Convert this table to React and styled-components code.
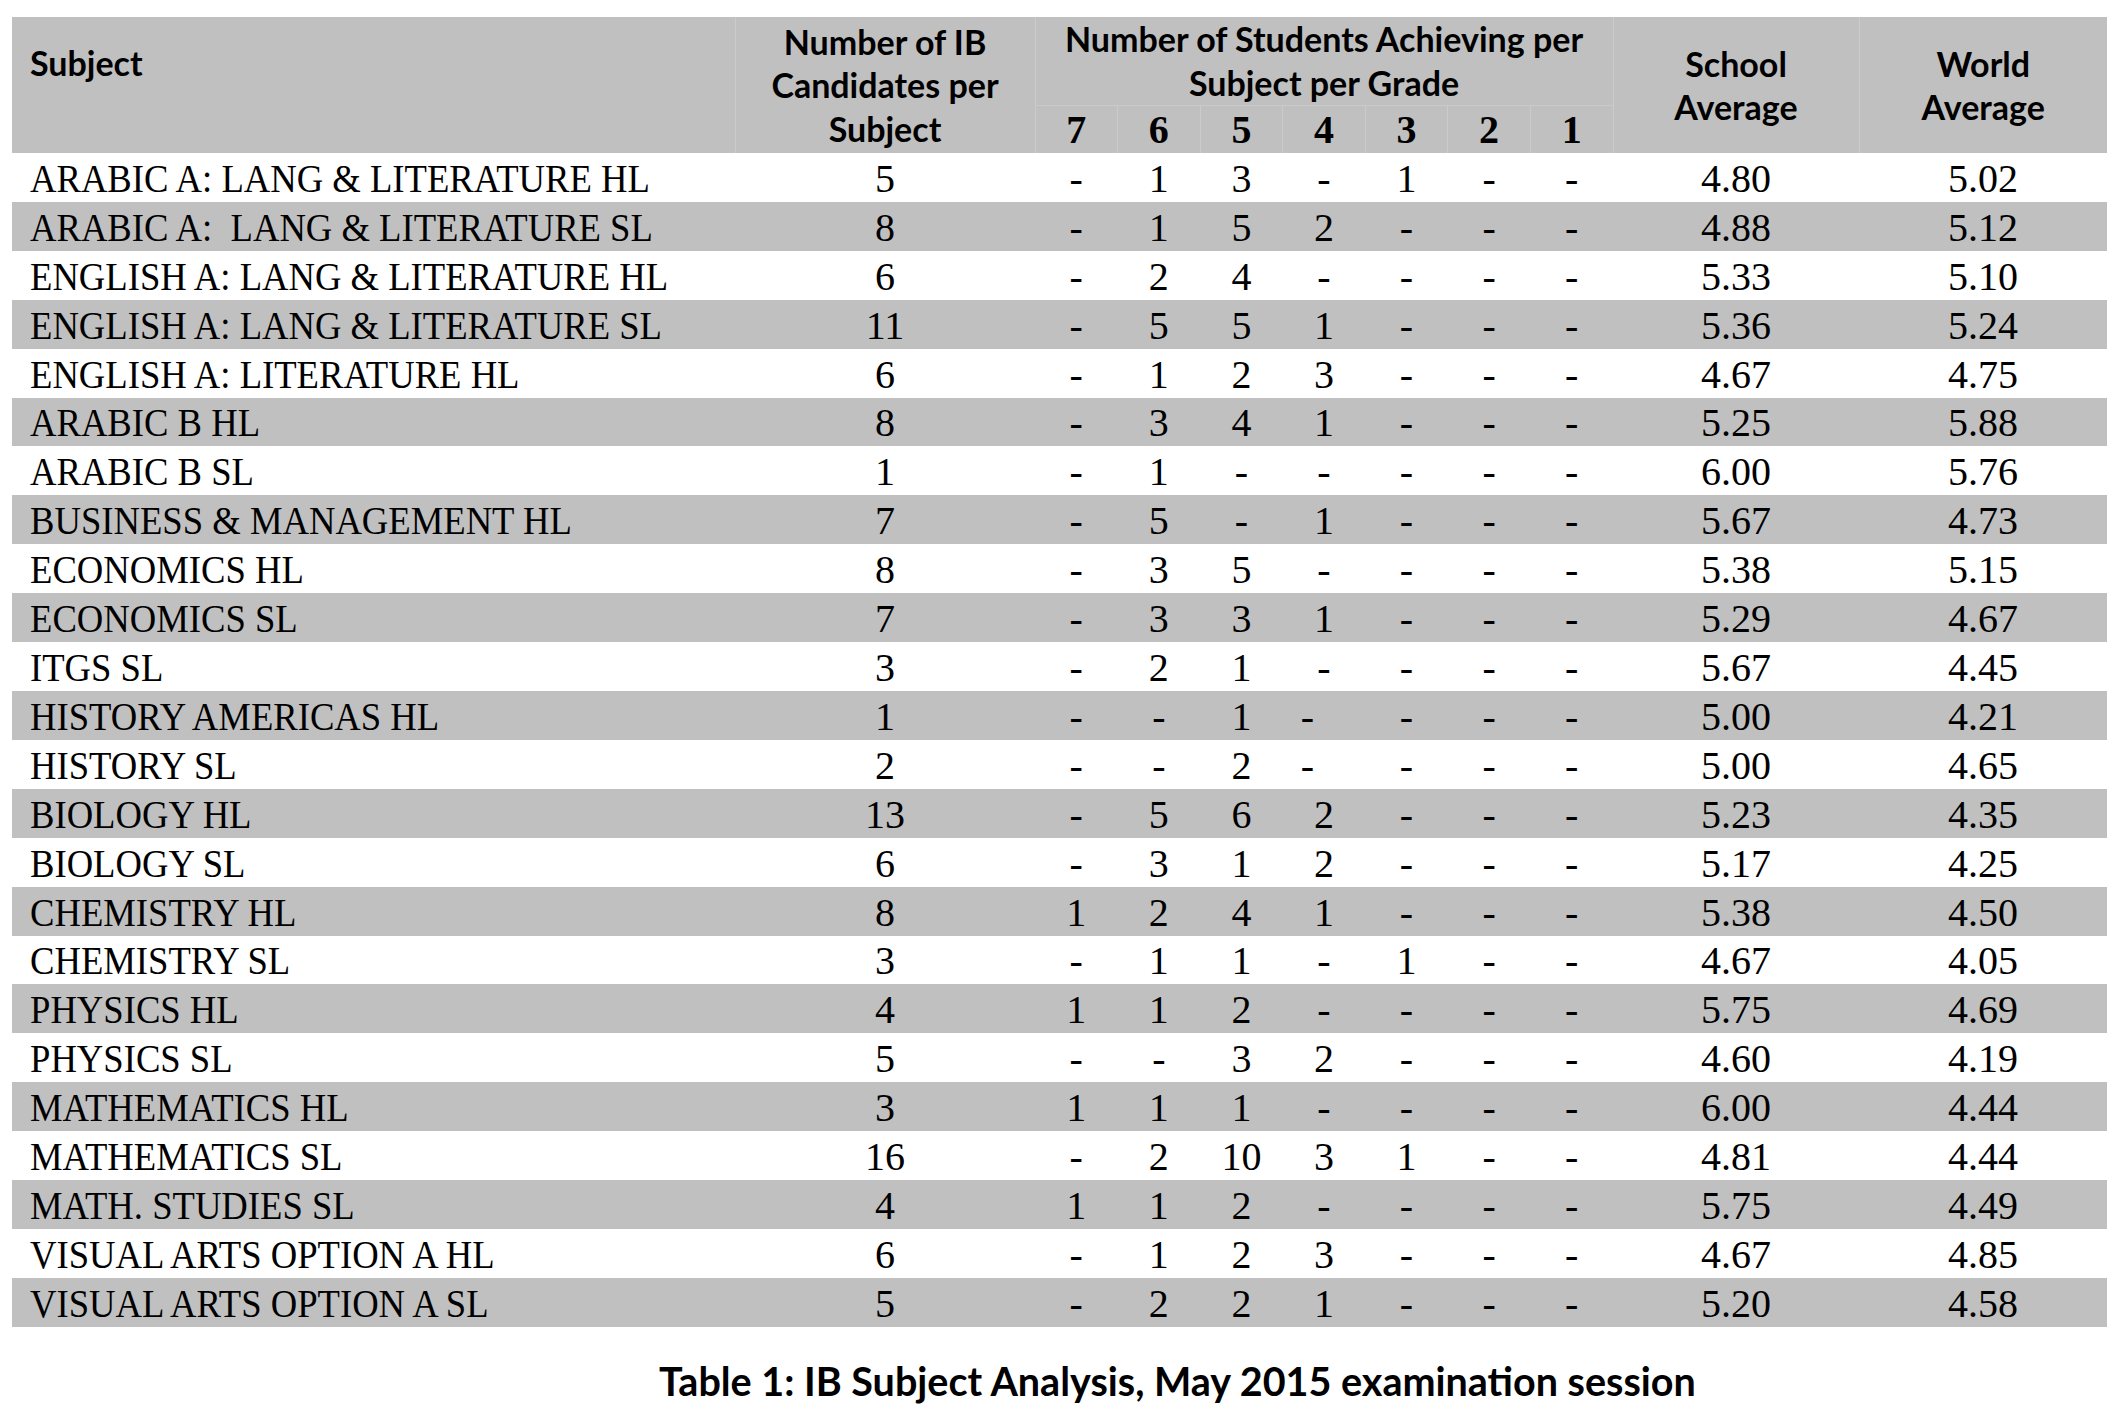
import React from 'react';
import styled, { createGlobalStyle } from 'styled-components';

// results for the May 2015 session, one row per subject
// grades are listed 7 → 1, '-' means nobody got that grade
const subjects = [
  { name: 'ARABIC A: LANG & LITERATURE HL', count: 5, grades: ['-', '1', '3', '-', '1', '-', '-'], school: '4.80', world: '5.02' },
  { name: 'ARABIC A:  LANG & LITERATURE SL', count: 8, grades: ['-', '1', '5', '2', '-', '-', '-'], school: '4.88', world: '5.12' },
  { name: 'ENGLISH A: LANG & LITERATURE HL', count: 6, grades: ['-', '2', '4', '-', '-', '-', '-'], school: '5.33', world: '5.10' },
  { name: 'ENGLISH A: LANG & LITERATURE SL', count: 11, grades: ['-', '5', '5', '1', '-', '-', '-'], school: '5.36', world: '5.24' },
  { name: 'ENGLISH A: LITERATURE HL', count: 6, grades: ['-', '1', '2', '3', '-', '-', '-'], school: '4.67', world: '4.75' },
  { name: 'ARABIC B HL', count: 8, grades: ['-', '3', '4', '1', '-', '-', '-'], school: '5.25', world: '5.88' },
  { name: 'ARABIC B SL', count: 1, grades: ['-', '1', '-', '-', '-', '-', '-'], school: '6.00', world: '5.76' },
  { name: 'BUSINESS & MANAGEMENT HL', count: 7, grades: ['-', '5', '-', '1', '-', '-', '-'], school: '5.67', world: '4.73' },
  { name: 'ECONOMICS HL', count: 8, grades: ['-', '3', '5', '-', '-', '-', '-'], school: '5.38', world: '5.15' },
  { name: 'ECONOMICS SL', count: 7, grades: ['-', '3', '3', '1', '-', '-', '-'], school: '5.29', world: '4.67' },
  { name: 'ITGS SL', count: 3, grades: ['-', '2', '1', '-', '-', '-', '-'], school: '5.67', world: '4.45' },
  { name: 'HISTORY AMERICAS HL', count: 1, grades: ['-', '-', '1', '-', '-', '-', '-'], school: '5.00', world: '4.21', shifted: 3 },
  { name: 'HISTORY SL', count: 2, grades: ['-', '-', '2', '-', '-', '-', '-'], school: '5.00', world: '4.65', shifted: 3 },
  { name: 'BIOLOGY HL', count: 13, grades: ['-', '5', '6', '2', '-', '-', '-'], school: '5.23', world: '4.35' },
  { name: 'BIOLOGY SL', count: 6, grades: ['-', '3', '1', '2', '-', '-', '-'], school: '5.17', world: '4.25' },
  { name: 'CHEMISTRY HL', count: 8, grades: ['1', '2', '4', '1', '-', '-', '-'], school: '5.38', world: '4.50' },
  { name: 'CHEMISTRY SL', count: 3, grades: ['-', '1', '1', '-', '1', '-', '-'], school: '4.67', world: '4.05' },
  { name: 'PHYSICS HL', count: 4, grades: ['1', '1', '2', '-', '-', '-', '-'], school: '5.75', world: '4.69' },
  { name: 'PHYSICS SL', count: 5, grades: ['-', '-', '3', '2', '-', '-', '-'], school: '4.60', world: '4.19' },
  { name: 'MATHEMATICS HL', count: 3, grades: ['1', '1', '1', '-', '-', '-', '-'], school: '6.00', world: '4.44' },
  { name: 'MATHEMATICS SL', count: 16, grades: ['-', '2', '10', '3', '1', '-', '-'], school: '4.81', world: '4.44' },
  { name: 'MATH. STUDIES SL', count: 4, grades: ['1', '1', '2', '-', '-', '-', '-'], school: '5.75', world: '4.49' },
  { name: 'VISUAL ARTS OPTION A HL', count: 6, grades: ['-', '1', '2', '3', '-', '-', '-'], school: '4.67', world: '4.85' },
  { name: 'VISUAL ARTS OPTION A SL', count: 5, grades: ['-', '2', '2', '1', '-', '-', '-'], school: '5.20', world: '4.58' },
];

const gradeLabels = ['7', '6', '5', '4', '3', '2', '1'];

const App = () => {
  return (
    <>
      <GlobalStyle />
      <Page>
        <Table>
          <colgroup>
            <col style={{ width: 723 }} />
            <col style={{ width: 300 }} />
            {gradeLabels.map((g) => (
              <col key={g} style={{ width: 82.57 }} />
            ))}
            <col style={{ width: 246 }} />
            <col style={{ width: 248 }} />
          </colgroup>
          <thead>
            <HeadRow $h={88}>
              <SubjectHead rowSpan={2}>Subject</SubjectHead>
              <HeadCell rowSpan={2}>
                Number of IB
                <br />
                Candidates per
                <br />
                Subject
              </HeadCell>
              <HeadCell colSpan={7}>
                Number of Students Achieving per
                <br />
                Subject per Grade
              </HeadCell>
              <HeadCell rowSpan={2}>
                School
                <br />
                Average
              </HeadCell>
              <HeadCell rowSpan={2}>
                World
                <br />
                Average
              </HeadCell>
            </HeadRow>
            <HeadRow $h={48}>
              {gradeLabels.map((g) => (
                <GradeHead key={g}>{g}</GradeHead>
              ))}
            </HeadRow>
          </thead>
          <tbody>
            {subjects.map((s, idx) => (
              <BodyRow key={s.name} $shaded={idx % 2 === 1}>
                <SubjectCell>
                  <Narrow>{s.name}</Narrow>
                </SubjectCell>
                <Cell>{s.count}</Cell>
                {s.grades.map((g, i) => (
                  <Cell key={i} $left={s.shifted === i}>
                    {g}
                  </Cell>
                ))}
                <Cell>{s.school}</Cell>
                <Cell>{s.world}</Cell>
              </BodyRow>
            ))}
          </tbody>
        </Table>
        <Caption>Table 1: IB Subject Analysis, May 2015 examination session</Caption>
      </Page>
    </>
  );
};

export default App;

const GlobalStyle = createGlobalStyle`
  html, body {
    margin: 0;
    padding: 0;
    background: #ffffff;
  }
`;

const Page = styled.div`
  width: 2110px;
  height: 1418px;
  padding: 17px 3px 0 12px;
  box-sizing: border-box;
  background: #ffffff;
  overflow: hidden;
`;

const Table = styled.table`
  width: 2095px;
  table-layout: fixed;
  border-collapse: collapse;
  border-spacing: 0;
`;

const HeadRow = styled.tr`
  height: ${(p) => p.$h}px;
  background: #c0c0c0;
`;

const HeadCell = styled.th`
  padding: 0;
  font-family: Lato, 'Open Sans', sans-serif;
  font-weight: 700;
  font-size: 34px;
  line-height: 43.5px;
  color: #000;
  text-align: center;
  vertical-align: middle;
  border-left: 1px solid #cbcbcb;
`;

const SubjectHead = styled(HeadCell)`
  text-align: left;
  vertical-align: top;
  padding: 24px 0 0 18px;
  border-left: none;
`;

const GradeHead = styled.th`
  padding: 2px 0 0 0;
  font-family: 'Liberation Serif', 'Times New Roman', serif;
  font-weight: 700;
  font-size: 40px;
  line-height: 44px;
  color: #000;
  text-align: center;
  vertical-align: middle;
  border-left: 1px solid #cbcbcb;
  border-top: 1px solid #c9c9c9;
`;

const BodyRow = styled.tr`
  height: 48.92px;
  background: ${(p) => (p.$shaded ? '#c0c0c0' : '#ffffff')};
`;

const Cell = styled.td`
  padding: ${(p) => (p.$left ? '3px 0 0 18px' : '3px 0 0 0')};
  font-family: 'Liberation Serif', 'Times New Roman', serif;
  font-size: 40px;
  line-height: 44px;
  color: #000;
  text-align: ${(p) => (p.$left ? 'left' : 'center')};
  vertical-align: middle;
  white-space: pre;
`;

const SubjectCell = styled(Cell)`
  text-align: left;
  padding-left: 18px;
`;

// the subject names are set narrower than the figures
const Narrow = styled.span`
  display: inline-block;
  transform: scaleX(0.916);
  transform-origin: 0 50%;
`;

const Caption = styled.div`
  padding: 30px 0 0 647px;
  font-family: Lato, 'Open Sans', sans-serif;
  font-weight: 700;
  font-size: 39.5px;
  line-height: 48px;
  color: #000;
`;
